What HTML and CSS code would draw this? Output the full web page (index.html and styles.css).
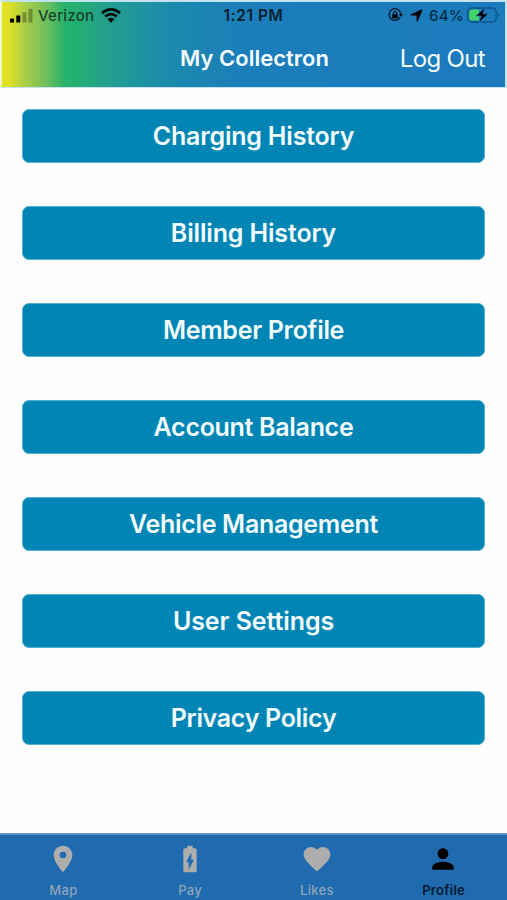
FILE: index.html
```html
<!DOCTYPE html>
<html lang="en">
<head>
<meta charset="utf-8">
<title>My Collectron</title>
<link rel="stylesheet" href="styles.css">
</head>
<body>
<div class="app">
  <header class="header">
    <div class="status">
      <div class="carrier">
        <svg class="signal" width="23" height="15" viewBox="0 0 23 15"><path d="M0 10.500h4V14.500H0zM6.300 7.500h4V14.500h-4z"/><path opacity=".3" d="M12.500 4.200h4V14.500h-4zM18.500 1h4v13.500h-4z"/></svg>
        <span class="carrier-name">Verizon</span>
        <svg class="wifi" width="20" height="15" viewBox="0 0 20 15"><g fill="none" stroke="#000" stroke-width="2.600"><path d="M1 5.200Q10-2.400 19 5.200M4.200 8.600Q10 3.700 15.800 8.600"/></g><path d="M6.500 11.200Q10 8.300 13.500 11.200L10 14.800Z"/></svg>
      </div>
      <span class="time">1:21 PM</span>
      <div class="indicators">
        <svg class="lock" width="15" height="14" viewBox="0 0 15 14"><path d="M12.200 9A5.800 5.800 0 1 1 12.700 5.500" fill="none" stroke="#081d2d" stroke-width="1.400"/><path d="M10.800 5.800H15l-2 3zM4.300 6.300h5.400v4H4.300z"/><path d="M5.400 6.500V5a1.600 1.600 0 0 1 3.200 0v1.500" fill="none" stroke="#000"/></svg>
        <svg class="arrow" width="13" height="13" viewBox="0 0 13 13"><path d="M11.600.4Q12.700.2 12.300 1.300L7.900 12Q7 13.400 6.600 12V6.600H1.200Q-.3 6.200 1 5.200Z"/></svg>
        <span class="percent">64%</span>
        <svg class="battery" width="33" height="18" viewBox="0 0 33 18"><rect x=".7" y="2" width="28.500" height="14" rx="4" fill="none" stroke="#0b5288" stroke-width="1.300"/><path d="M5 3.600h7v11H5a3 3 0 0 1-2.700-3V6.500A3 3 0 0 1 5 3.600z" fill="#43d565"/><path d="M30.700 6.500q3 2.500 0 5z" fill="#0b5288"/><path d="M18.300 1.200 8.800 10h5.300l-2.100 6.800 9.200-9h-5.300z" stroke="#1b7dba" stroke-width=".8"/></svg>
      </div>
    </div>
    <div class="navbar">
      <h1 class="title">My Collectron</h1>
      <a class="logout">Log Out</a>
    </div>
  </header>
  <main class="menu">
    <button class="item charging">Charging History</button>
    <button class="item billing">Billing History</button>
    <button class="item member">Member Profile</button>
    <button class="item account">Account Balance</button>
    <button class="item vehicle">Vehicle Management</button>
    <button class="item user">User Settings</button>
    <button class="item privacy">Privacy Policy</button>
  </main>
  <nav class="tabs">
    <a class="tab"><svg width="32" height="32" viewBox="0 0 24 24"><path d="M12 2C8.130 2 5 5.130 5 9c0 5.250 7 13 7 13s7-7.750 7-13c0-3.870-3.130-7-7-7zm0 9.500a2.500 2.500 0 1 1 0-5 2.500 2.500 0 0 1 0 5z"/></svg><span>Map</span></a>
    <a class="tab"><svg width="32" height="32" viewBox="0 0 24 24"><path d="M15.670 4H14V2h-4v2H8.330C7.600 4 7 4.600 7 5.330v15.330C7 21.400 7.600 22 8.330 22h7.330c.74 0 1.340-.6 1.340-1.330V5.330C17 4.600 16.400 4 15.670 4zM11 20v-5.500H9L13 7v5.500h2L11 20z"/></svg><span>Pay</span></a>
    <a class="tab"><svg width="32" height="32" viewBox="0 0 24 24"><path d="M12 21.350l-1.450-1.320C5.400 15.360 2 12.280 2 8.500 2 5.420 4.420 3 7.500 3c1.740 0 3.410.81 4.500 2.090C13.090 3.810 14.760 3 16.500 3 19.580 3 22 5.420 22 8.500c0 3.780-3.400 6.860-8.550 11.540L12 21.350z"/></svg><span>Likes</span></a>
    <a class="tab active"><svg width="32" height="32" viewBox="0 0 24 24"><path d="M12 12c2.210 0 4-1.790 4-4s-1.790-4-4-4-4 1.790-4 4 1.790 4 4 4zm0 2c-2.670 0-8 1.340-8 4v2h16v-2c0-2.660-5.330-4-8-4z"/></svg><span>Profile</span></a>
  </nav>
</div>
</body>
</html>
```
FILE: styles.css
```css
* { box-sizing: border-box; }
body { margin: 0; background: #fefefe; font-family: Inter, "Liberation Sans", sans-serif; }
.app { width: 507px; height: 900px; display: flex; flex-direction: column; overflow: hidden; }
.header {
  height: 88px;
  border: 2px solid #c5e2ef;
  border-bottom-width: 1px;
  border-left-color: #eff8ca;
  background: linear-gradient(90deg, #e4e321 0, #dce027 8px, #a9ce47 23px, #72bf5c 44px, #25b36b 63px, #24ad78 80px, #239c91 110px, #1e92a2 145px, #1b87b0 180px, #1b7dba 250px, #1b7bbd 100%);
}
.status { display: grid; grid-template-columns: 1fr auto 1fr; height: 26px; align-items: center; color: #06202c; font-size: 15px; font-weight: 500; }
.carrier { display: flex; align-items: center; padding-left: 8px; }
.carrier-name { margin-left: 5px; width: 57px; letter-spacing: .25px; color: #17422d; white-space: nowrap; }
.wifi { margin-left: 6px; }
.time { font-weight: 600; font-size: 15.5px; letter-spacing: .55px; }
.indicators { display: flex; align-items: center; justify-content: flex-end; padding-right: 5px; }
.arrow { margin-left: 7px; }
.percent { margin-left: 6px; width: 35px; letter-spacing: .2px; color: #062c48; white-space: nowrap; }
.battery { margin-left: 3px; }
.navbar { display: grid; grid-template-columns: 1fr auto 1fr; align-items: center; height: 59px; color: #f5fcff; }
.title { grid-column: 2; margin: 0; padding-left: 2px; font-size: 22px; font-weight: 600; letter-spacing: 0; }
.logout { justify-self: end; padding: 1px 20px 0 0; font-size: 24px; font-weight: 400; letter-spacing: -.65px; }
.menu { flex: 1; display: flex; flex-direction: column; gap: 43px; padding: 21px 22px 0; }
.item { height: 54px; border: 1px solid #58aecd; border-radius: 7px; background: #0085b4; color: #f3fcff; font: 600 25px/52px Inter, "Liberation Sans", sans-serif; padding: 0; letter-spacing: -.3px; }
.charging { letter-spacing: -.2px; }
.billing { letter-spacing: -.15px; }
.user { letter-spacing: -.08px; }
.tabs { display: grid; grid-template-columns: repeat(4, 1fr); height: 67px; border-top: 2px solid #6098c5; background: #206aaf; }
.tab { display: flex; flex-direction: column; align-items: center; padding-top: 8px; fill: #adadad; color: #8fa4b8; font-size: 13px; font-weight: 500; line-height: 16px; letter-spacing: .3px; }
.tab span { margin-top: 7px; }
.active { fill: #000; color: #06192d; font-weight: 600; }
.active svg { margin-left: -1px; }
```
